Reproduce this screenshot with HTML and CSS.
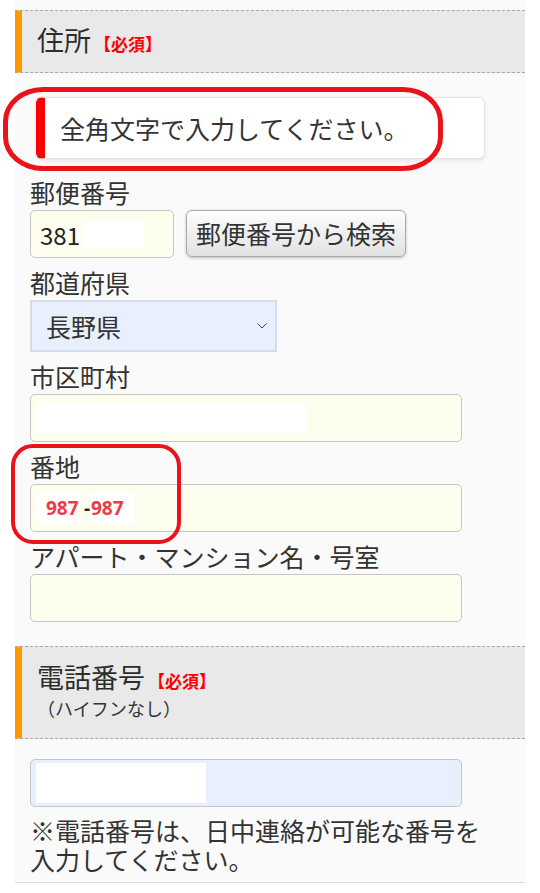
FILE: index.html
```html
<!DOCTYPE html>
<html>
	<head>
		<meta charset="utf-8" />
		<title>住所入力</title>
		<link rel="stylesheet" href="styles.css">
	</head>
	<body>
		<div class="panel">
			<div class="sec-head">
				<span class="sec-title">住所</span><span class="req">【必須】</span>
			</div>
			<div class="sec-body">
				<div class="notice">全角文字で入力してください。</div>

				<div class="field first">
					<div class="label">郵便番号</div>
					<div class="zip-row">
						<div class="input zip"><span class="num">381</span><span class="mask mask-zip"></span></div>
						<div class="btn">郵便番号から検索</div>
					</div>
				</div>

				<div class="field">
					<div class="label">都道府県</div>
					<div class="select">
						<span>長野県</span>
						<svg width="10" height="6" viewBox="0 0 10 6"><polyline points="0.5,0.5 5,5 9.5,0.5" fill="none" stroke="#444" stroke-width="1"/></svg>
					</div>
				</div>

				<div class="field">
					<div class="label">市区町村</div>
					<div class="input"><span class="mask mask-city"></span></div>
				</div>

				<div class="field">
					<div class="label">番地</div>
					<div class="input banchi">
						<span class="patch">987</span><span class="dash">-</span><span class="patch patch2">987</span>
					</div>
				</div>

				<div class="field">
					<div class="label">アパート・マンション名・号室</div>
					<div class="input"></div>
				</div>
			</div>

			<div class="sec-head tel-head">
				<div class="tel-title"><span class="sec-title">電話番号</span><span class="req">【必須】</span></div>
				<div class="sub">（ハイフンなし）</div>
			</div>
			<div class="sec-body">
				<div class="input tel"><span class="mask mask-tel"></span></div>
				<p class="note">※電話番号は、日中連絡が可能な番号を入力してください。</p>
			</div>
		</div>

		<!-- 注釈の赤枠 -->
		<div class="mark mark-notice"></div>
		<div class="mark mark-banchi"></div>
	</body>
</html>
```

FILE: styles.css
```css
body{
	margin: 0;
	background: #fff;
	font-family: "Noto Sans CJK JP", "Noto Sans", sans-serif;
	color: #333;
	position: relative;
}
.panel{
	margin-left: 15px;
	width: 510px;
	background: #fafafa;
	padding: 10px 0 8px;
	border-bottom: 1px solid #ddd;
}
.sec-head{
	height: 63px;
	box-sizing: border-box;
	background: #e9e9e9;
	border-top: 1px dashed #a8a8a8;
	border-bottom: 1px dashed #a8a8a8;
	border-left: 7px solid #f90;
	padding: 0 15px;
	font-size: 27px;
	line-height: 58px;
}
.sec-title{
	font-size: 27px;
	line-height: 1;
	color: #2d2d2d;
}
.req{
	font-size: 17px;
	line-height: 1;
	font-weight: bold;
	color: #f00;
	margin-left: 3px;
}
.tel-head{
	height: 93px;
	margin-top: 24px;
	padding: 12px 15px 0;
	line-height: normal;
}
.tel-title{
	height: 36px;
	line-height: 36px;
}
.tel-head .sub{
	font-size: 18px;
	line-height: 26px;
	color: #333;
}
.sec-body{
	padding: 0 15px;
}
.notice{
	margin: 24px 0 0 6px;
	width: 449px;
	height: 62px;
	box-sizing: border-box;
	background: #fff;
	border: 1px solid #e3e3e3;
	border-left: 9px solid #f00;
	border-radius: 6px;
	box-shadow: 0 2px 4px rgba(0,0,0,0.08);
	display: flex;
	align-items: center;
	padding-left: 15px;
	font-size: 25px;
}
.field{
	margin-top: 8px;
}
.field.first{
	margin-top: 17px;
}
.label{
	font-size: 25px;
	line-height: 32px;
}
.input{
	margin-top: 2px;
	width: 432px;
	height: 48px;
	box-sizing: border-box;
	background: #fefeef;
	border: 1px solid #c5c5c5;
	border-radius: 5px;
	display: flex;
	align-items: center;
	padding-left: 5px;
}
.zip-row{
	display: flex;
	align-items: flex-start;
}
.input.zip{
	width: 144px;
	padding-left: 9px;
}
.num{
	font-size: 24px;
	color: #222;
}
.mask{
	display: inline-block;
	background: #fff;
}
.mask-zip{
	width: 60px;
	height: 27px;
	margin-left: 4px;
}
.mask-city{
	width: 271px;
	height: 32px;
}
.btn{
	margin: 2px 0 0 12px;
	height: 47px;
	box-sizing: border-box;
	padding: 0 9px;
	border: 1px solid #aaa;
	border-radius: 6px;
	background: linear-gradient(#fdfdfd, #e2e2e2);
	box-shadow: 0 1px 3px rgba(0,0,0,0.25);
	font-size: 25px;
	line-height: 45px;
}
.select{
	margin-top: 2px;
	width: 247px;
	height: 52px;
	box-sizing: border-box;
	background: #e8f0fe;
	border: 2px solid #d6dde8;
	display: flex;
	align-items: center;
	justify-content: space-between;
	padding: 0 8px 0 14px;
	font-size: 25px;
}
.banchi{
	font-family: "Open Sans", "Liberation Sans", sans-serif;
	font-weight: bold;
	font-size: 19px;
}
.patch{
	background: #fff;
	color: #ee3a47;
	height: 32px;
	line-height: 32px;
	width: 45px;
	box-sizing: border-box;
	padding-left: 10px;
}
.patch2{
	width: 43px;
	padding-left: 1px;
}
.dash{
	color: #222;
	width: 9px;
	padding-left: 3px;
	box-sizing: border-box;
}
.input.tel{
	margin-top: 20px;
	background: #e8f0fe;
}
.mask-tel{
	width: 170px;
	height: 40px;
}
.note{
	margin: 9px 0 0;
	width: 460px;
	font-size: 25px;
	line-height: 29px;
}
.mark{
	position: absolute;
	box-sizing: border-box;
	border: 5px solid #e8131b;
}
.mark-notice{
	left: 3px;
	top: 87px;
	width: 440px;
	height: 84px;
	border-radius: 40px / 34px;
}
.mark-banchi{
	left: 11px;
	top: 444px;
	width: 170px;
	height: 100px;
	border-width: 4px;
	border-radius: 22px;
}
```
